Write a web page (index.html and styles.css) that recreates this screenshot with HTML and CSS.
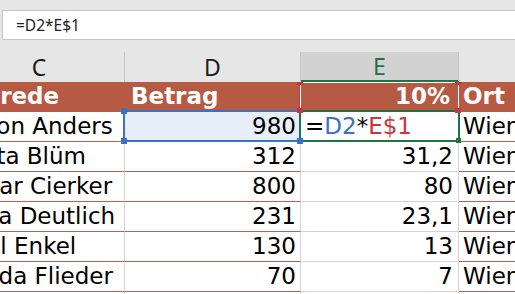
FILE: index.html
```html
<!DOCTYPE html>
<html lang="de">
<head>
<meta charset="utf-8">
<title>Excel Formel</title>
<link rel="stylesheet" href="styles.css">
</head>
<body>
<div class="formula-area">
  <div class="formula-box">=D2*E$1</div>
</div>
<div class="sheet">
  <div class="row colhead">
    <div class="cell">C</div>
    <div class="cell">D</div>
    <div class="cell active-col">E</div>
    <div class="cell">F</div>
  </div>
  <div class="row thead">
    <div class="cell c">Anrede</div>
    <div class="cell d">Betrag</div>
    <div class="cell e ref-red">10%<span class="h h-tl"></span><span class="h h-tr"></span></div>
    <div class="cell f">Ort</div>
  </div>
  <div class="row">
    <div class="cell c">Anton Anders</div>
    <div class="cell d ref-blue">980<span class="b b-tl"></span><span class="b b-bl"></span><span class="b b-br"></span></div>
    <div class="cell e editing">=<span class="rb">D2</span>*<span class="rr">E$1</span><span class="h h-bl"></span><span class="h h-br"></span><span class="g g-br"></span></div>
    <div class="cell f">Wien</div>
  </div>
  <div class="row">
    <div class="cell c">Berta Blüm</div>
    <div class="cell d">312</div>
    <div class="cell e">31,2</div>
    <div class="cell f">Wien</div>
  </div>
  <div class="row">
    <div class="cell c">Cäsar Cierker</div>
    <div class="cell d">800</div>
    <div class="cell e">80</div>
    <div class="cell f">Wien</div>
  </div>
  <div class="row">
    <div class="cell c">Dora Deutlich</div>
    <div class="cell d">231</div>
    <div class="cell e">23,1</div>
    <div class="cell f">Wien</div>
  </div>
  <div class="row">
    <div class="cell c">Emil Enkel</div>
    <div class="cell d">130</div>
    <div class="cell e">13</div>
    <div class="cell f">Wien</div>
  </div>
  <div class="row">
    <div class="cell c">Frieda Flieder</div>
    <div class="cell d">70</div>
    <div class="cell e">7</div>
    <div class="cell f">Wien</div>
  </div>
  <div class="row">
    <div class="cell c"></div>
    <div class="cell d"></div>
    <div class="cell e"></div>
    <div class="cell f"></div>
  </div>
</div>
</body>
</html>
```
FILE: styles.css
```css
html, body {
  margin: 0;
  padding: 0;
}
body {
  width: 515px;
  height: 294px;
  overflow: hidden;
  background: #e6e6e6;
}
.formula-area {
  padding: 10px 0 12px 2px;
}
.formula-box {
  height: 28px;
  margin-right: -10px;
  background: #fff;
  border: 1px solid #c6c6c6;
  box-sizing: content-box;
  padding-left: 13px;
  font-family: "Noto Sans", "Open Sans", sans-serif;
  font-size: 15.5px;
  line-height: 28px;
  color: #222;
}
.sheet {
  margin-left: -46px;
  width: 640px;
}
.row {
  display: grid;
  grid-template-columns: 171px 176px 158px 135px;
  height: 30px;
}
.cell {
  box-sizing: border-box;
  height: 30px;
  border-right: 1px solid #d4d4d4;
  border-bottom: 1px solid #b4654f;
  background: #fff;
  font-family: "DejaVu Sans", Verdana, sans-serif;
  font-size: 23px;
  line-height: 28px;
  color: #000;
  white-space: nowrap;
  overflow: visible;
  position: relative;
}
.cell.c { padding-left: 3px; overflow: hidden; }
.cell.d { text-align: right; padding-right: 4px; }
.cell.e { text-align: right; padding-right: 5px; border-bottom-color: #d4d4d4; }
.cell.f { padding-left: 4px; }

/* column header */
.colhead .cell {
  background: #e6e6e6;
  border-right: 1px solid #c6c6c6;
  border-bottom: none;
  font-family: "Noto Sans", "Open Sans", sans-serif;
  font-size: 23px;
  line-height: 30px;
  text-align: center;
  color: #1a1a1a;
}
.colhead .active-col {
  background: #d2d2d2;
  color: #217346;
  border-bottom: 2px solid #217346;
  line-height: 28px;
}

/* table header row */
.thead .cell {
  background: #b65a43;
  border-right-color: #b65a43;
  border-bottom-color: #b65a43;
  color: #fff;
  font-weight: bold;
}
.thead .cell.c { padding-left: 12px; }
.thead .cell.d { text-align: left; padding-left: 6px; }
.thead .cell.e { padding-right: 8px; }
.thead .cell.f { padding-left: 4px; }

/* reference highlights */
.ref-blue { background: #e8eef9; }
.ref-blue::after {
  content: "";
  position: absolute;
  left: -2px;
  top: -2px;
  width: 178px;
  height: 32px;
  border: 2px solid #3a70c6;
  box-sizing: border-box;
  pointer-events: none;
}
.ref-red::after {
  content: "";
  position: absolute;
  left: -2px;
  top: 0;
  width: 161px;
  height: 31px;
  border: 1px solid #c9343f;
  border-top: none;
  box-shadow: inset 1px 1px 0 #fff, inset -1px 0 0 #fff;
  box-sizing: border-box;
  pointer-events: none;
}
.editing {
  text-align: left !important;
  padding-left: 4px;
}
.editing::after {
  content: "";
  position: absolute;
  left: -2px;
  top: -2px;
  width: 161px;
  height: 32px;
  border: 2px solid #217346;
  box-sizing: border-box;
  pointer-events: none;
  z-index: 1;
}
.rb { color: #3a70c6; }
.rr { color: #c9343f; }

.h, .b, .g {
  position: absolute;
  width: 6px;
  height: 6px;
  z-index: 3;
}
.h { background: #c9343f; }
.b { background: #3a70c6; }
.g { background: #217346; width: 5px; height: 5px; }
.h-tl { left: -4px; top: 0; height: 3px; }
.h-tr { right: -3px; top: 0; height: 3px; }
.h-bl { left: -4px; top: -4px; height: 5px; }
.h-br { right: -3px; top: -4px; height: 5px; }
.b-tl { left: -4px; top: -4px; }
.b-bl { left: -4px; bottom: -3px; }
.b-br { right: -3px; bottom: -3px; }
.g-br { right: -3px; bottom: -2px; }
```
